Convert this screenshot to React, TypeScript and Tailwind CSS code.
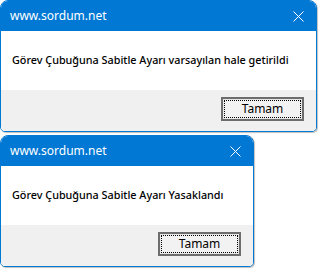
import React from "react";

function CloseIcon() {
  return (
    <svg width="11" height="11" viewBox="0 0 11 11" className="text-white">
      <path d="M0.5 0.5 L10.5 10.5 M10.5 0.5 L0.5 10.5" stroke="currentColor" strokeWidth="1" />
    </svg>
  );
}

function MessageBox({ width, text }: { width: string; text: string }) {
  return (
    <div className={`${width} flex flex-col overflow-hidden rounded-t-lg rounded-b-[5px] border border-[#0078d4] bg-white shadow-[1px_1px_1px_rgba(0,0,0,0.25)]`}>
      {/* title bar */}
      <div className="flex h-[30px] items-center justify-between bg-[#0078d4] pl-[9px] pr-[8px]">
        <span className="text-[12px] leading-none text-white">www.sordum.net</span>
        <div className="flex h-[30px] w-[20px] items-center justify-center">
          <CloseIcon />
        </div>
      </div>
      {/* message */}
      <div className="flex h-[59px] items-center bg-white pl-[11px] pb-[1px]">
        <span className="whitespace-nowrap text-[10.8px] font-medium leading-none text-black">{text}</span>
      </div>
      {/* footer */}
      <div className="flex h-[41px] items-start justify-end bg-[#f0f0f0] pr-[12px] pt-[7px]">
        <button className="flex h-[24px] w-[83px] items-center justify-center border-2 border-[#6d6d6d] bg-[#e9e9e9] p-[1px]">
          <span className="flex h-full w-full items-center justify-center border border-dotted border-black bg-[#f2f2f2] text-[12px] leading-none text-black">
            Tamam
          </span>
        </button>
      </div>
    </div>
  );
}

export default function App() {
  return (
    <div className="flex h-[269px] w-[319px] flex-col gap-[3px] bg-white font-['Noto_Sans',sans-serif]">
      <MessageBox width="w-[317px]" text="Görev Çubuğuna Sabitle Ayarı varsayılan hale getirildi" />
      <MessageBox width="w-[254px]" text="Görev Çubuğuna Sabitle Ayarı Yasaklandı" />
    </div>
  );
}
